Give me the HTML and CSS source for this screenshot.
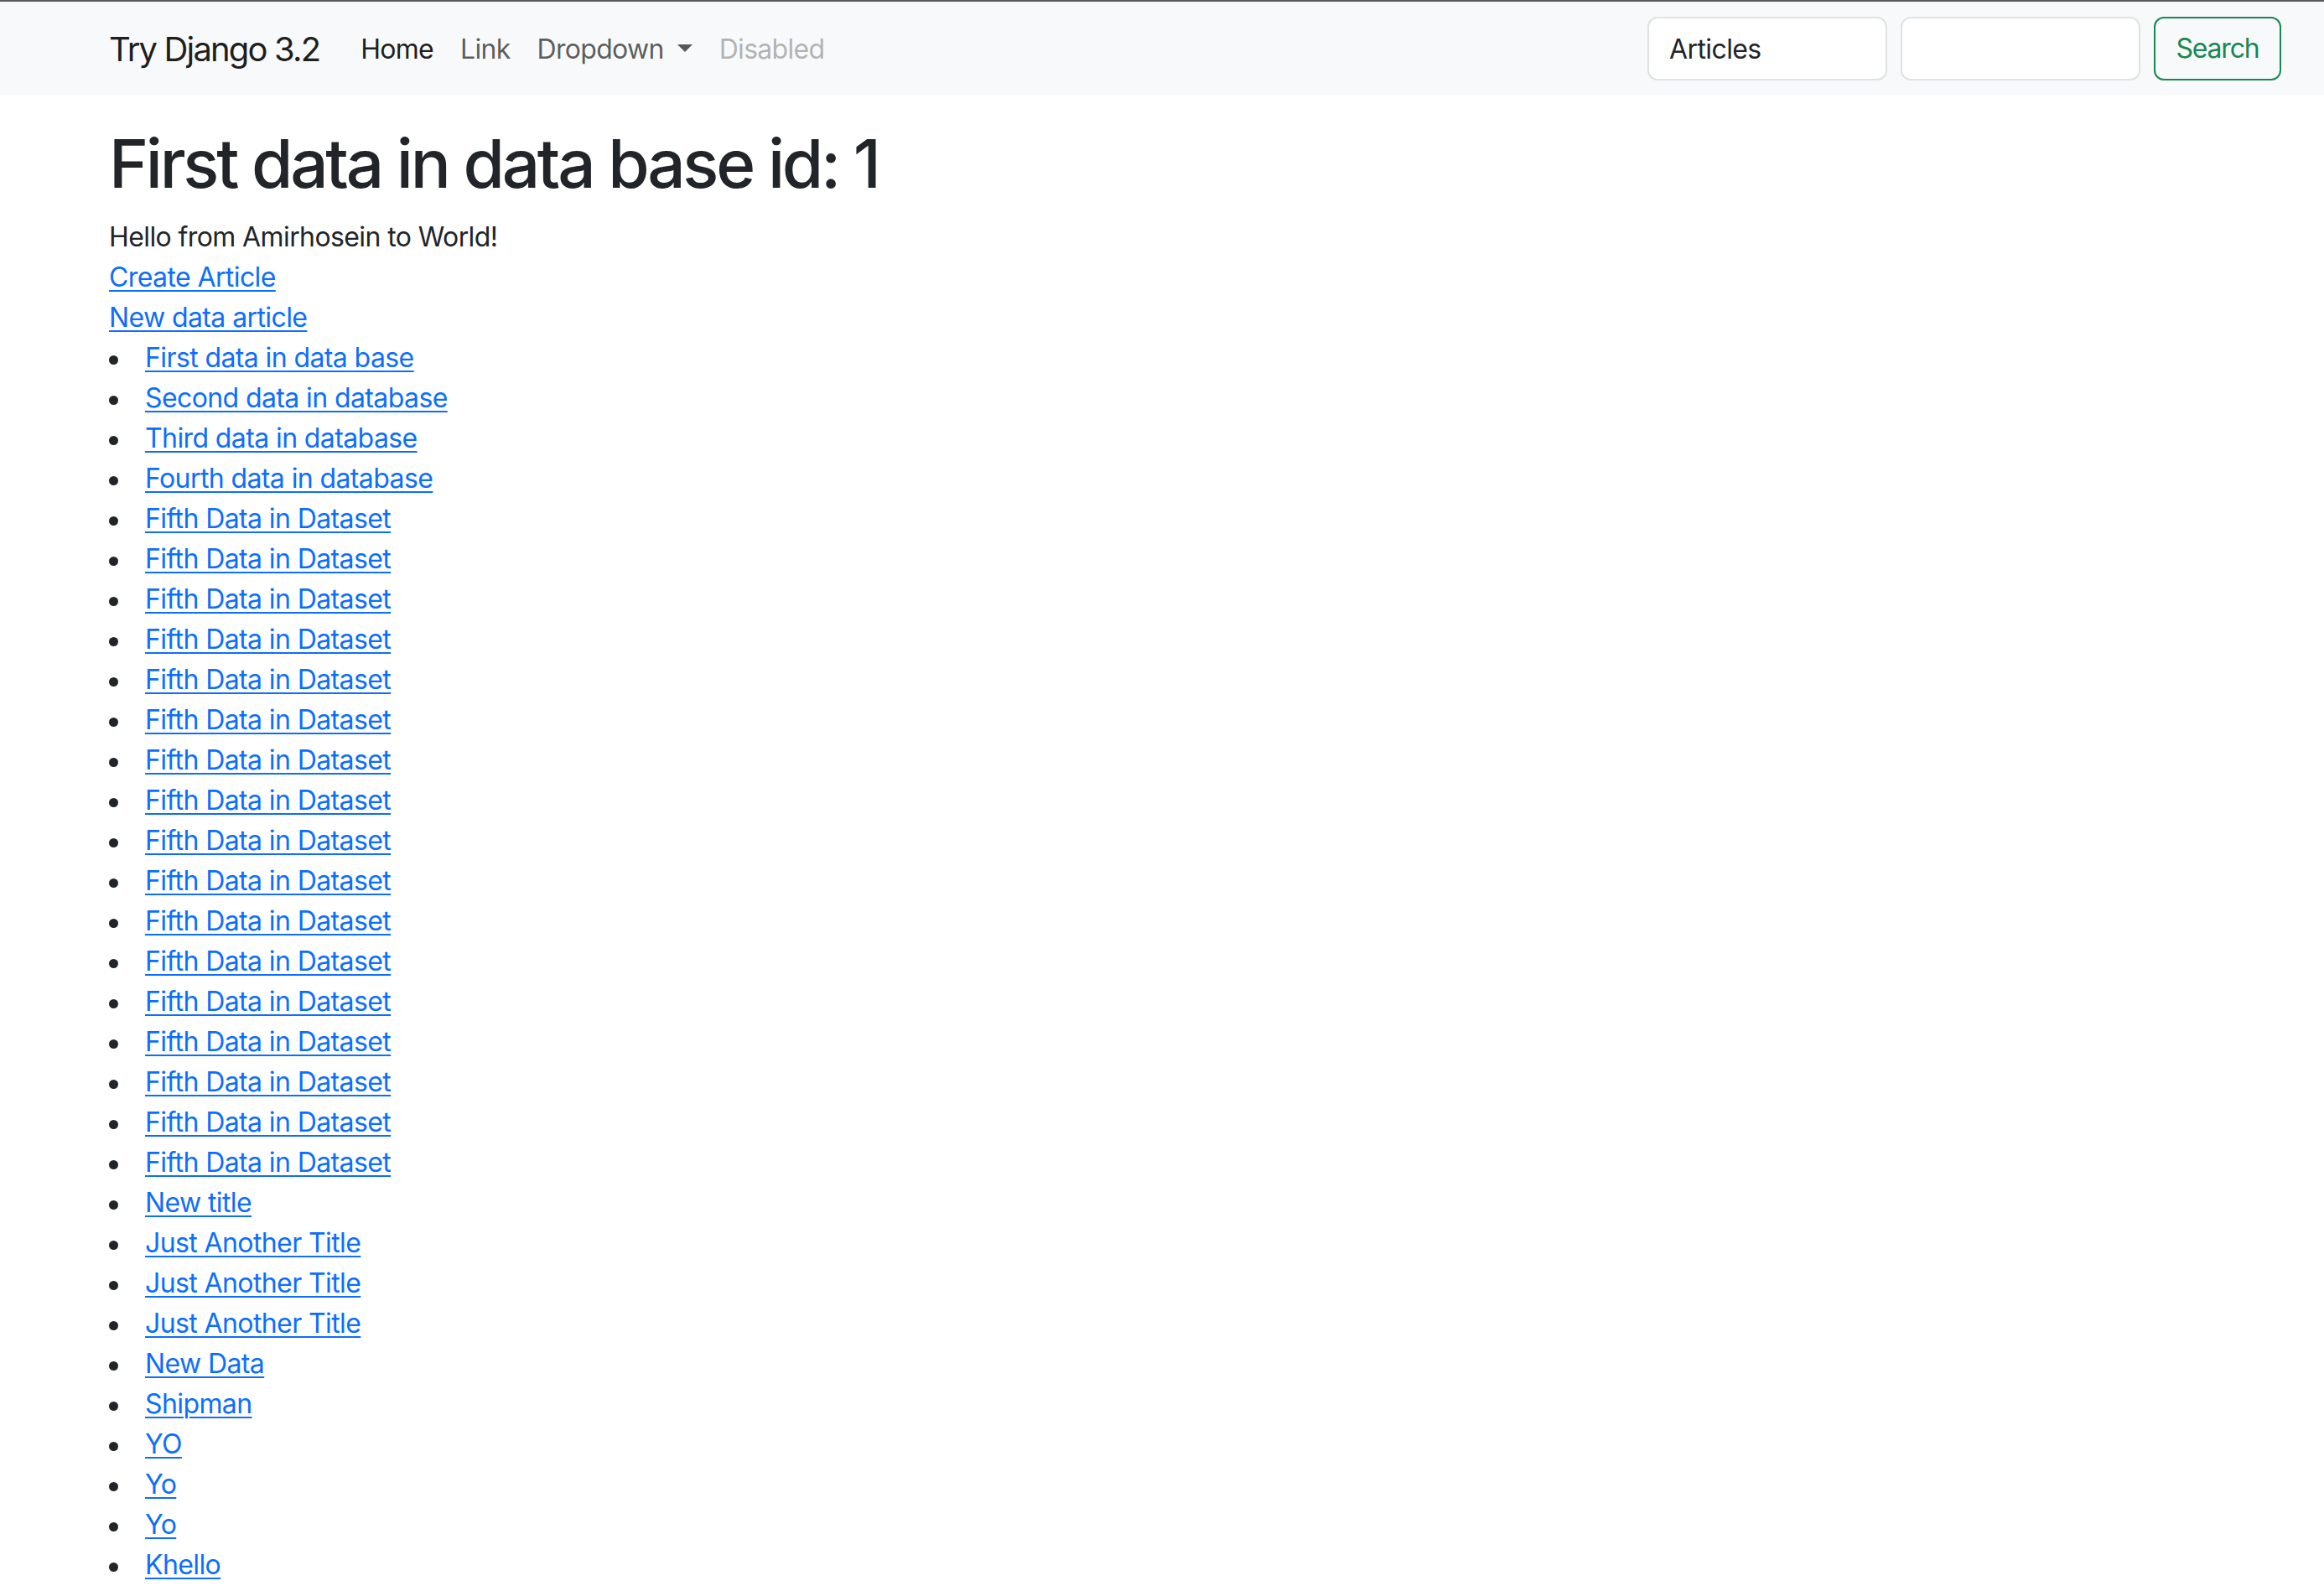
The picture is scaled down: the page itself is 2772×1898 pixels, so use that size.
FILE: index.html
```html
<!DOCTYPE html>
<html lang="en">
<head>
<meta charset="utf-8">
<title>Try Django 3.2</title>
<link rel="stylesheet" href="styles.css">
</head>
<body>
<nav class="navbar">
  <a class="brand" href="#">Try Django 3.2</a>
  <ul class="nav">
    <li><a class="nav-link active" href="#">Home</a></li>
    <li><a class="nav-link" href="#">Link</a></li>
    <li><a class="nav-link dropdown" href="#">Dropdown</a></li>
    <li><a class="nav-link disabled" href="#">Disabled</a></li>
  </ul>
  <form class="search">
    <input class="field" type="text" value="Articles">
    <input class="field" type="search">
    <button class="btn-search" type="button">Search</button>
  </form>
</nav>
<main class="content">
  <h1 class="title">First data in data base id: 1</h1>
  <div class="line">Hello from Amirhosein to World!</div>
  <div class="line"><a href="#">Create Article</a></div>
  <div class="line"><a href="#">New data article</a></div>
  <ul class="list">
    <li><a href="#">First data in data base</a></li>
    <li><a href="#">Second data in database</a></li>
    <li><a href="#">Third data in database</a></li>
    <li><a href="#">Fourth data in database</a></li>
    <li><a href="#">Fifth Data in Dataset</a></li>
    <li><a href="#">Fifth Data in Dataset</a></li>
    <li><a href="#">Fifth Data in Dataset</a></li>
    <li><a href="#">Fifth Data in Dataset</a></li>
    <li><a href="#">Fifth Data in Dataset</a></li>
    <li><a href="#">Fifth Data in Dataset</a></li>
    <li><a href="#">Fifth Data in Dataset</a></li>
    <li><a href="#">Fifth Data in Dataset</a></li>
    <li><a href="#">Fifth Data in Dataset</a></li>
    <li><a href="#">Fifth Data in Dataset</a></li>
    <li><a href="#">Fifth Data in Dataset</a></li>
    <li><a href="#">Fifth Data in Dataset</a></li>
    <li><a href="#">Fifth Data in Dataset</a></li>
    <li><a href="#">Fifth Data in Dataset</a></li>
    <li><a href="#">Fifth Data in Dataset</a></li>
    <li><a href="#">Fifth Data in Dataset</a></li>
    <li><a href="#">Fifth Data in Dataset</a></li>
    <li><a href="#">New title</a></li>
    <li><a href="#">Just Another Title</a></li>
    <li><a href="#">Just Another Title</a></li>
    <li><a href="#">Just Another Title</a></li>
    <li><a href="#">New Data</a></li>
    <li><a href="#">Shipman</a></li>
    <li><a href="#">YO</a></li>
    <li><a href="#">Yo</a></li>
    <li><a href="#">Yo</a></li>
    <li><a href="#">Khello</a></li>
  </ul>
</main>
</body>
</html>
```
FILE: styles.css
```css
html, body {
  margin: 0;
  padding: 0;
}
body {
  font-family: Inter, Roboto, "Liberation Sans", sans-serif;
  font-size: 32px;
  line-height: 48px;
  color: #212529;
  background: #fff;
  letter-spacing: -0.6px;
  overflow: hidden;
}
a {
  color: #0d6efd;
  text-decoration: underline;
  text-decoration-thickness: 2px;
  text-underline-offset: 4px;
}

/* navbar */
.navbar {
  display: flex;
  align-items: center;
  height: 110px;
  border-top: 2px solid #5b5b5b;
  background: #f8f9fa;
  padding: 2px 51px 0 130px;
  box-sizing: content-box;
}
.brand {
  font-size: 40px;
  line-height: 60px;
  letter-spacing: -1.85px;
  color: rgba(0, 0, 0, 0.9);
  text-decoration: none;
  margin-right: 33px;
}
.nav {
  display: flex;
  list-style: none;
  margin: 0;
  padding: 0;
}
.nav-link {
  display: block;
  padding: 16px 16px;
  line-height: 48px;
  color: rgba(0, 0, 0, 0.65);
  text-decoration: none;
  letter-spacing: -0.7px;
}
.nav-link.active {
  color: rgba(0, 0, 0, 0.9);
}
.nav-link.disabled {
  color: rgba(0, 0, 0, 0.3);
}
.dropdown::after {
  content: "";
  display: inline-block;
  margin-left: 16px;
  vertical-align: 8px;
  border-top: 9.6px solid rgba(0, 0, 0, 0.65);
  border-left: 9.6px solid transparent;
  border-right: 9.6px solid transparent;
}
.search {
  display: flex;
  gap: 16px;
  margin: -2px 0 0 auto;
}
.field {
  box-sizing: border-box;
  width: 286px;
  height: 76px;
  margin: 0;
  padding: 12px 24px;
  border: 2px solid #dee2e6;
  border-radius: 12px;
  background: #fff;
  font-family: inherit;
  font-size: 32px;
  letter-spacing: -0.6px;
  color: #212529;
  outline: none;
}
.btn-search {
  box-sizing: border-box;
  height: 76px;
  width: 152px;
  margin: 0;
  padding: 12px 24px;
  border: 2px solid #198754;
  border-radius: 12px;
  background: transparent;
  color: #198754;
  font-family: inherit;
  font-size: 32px;
  letter-spacing: -1.2px;
  line-height: 48px;
}

/* content */
.content {
  padding: 33px 130px 0 130px;
}
.title {
  margin: 0 0 16px 0;
  font-size: 80px;
  line-height: 96px;
  font-weight: 500;
  letter-spacing: -3.3px;
}
.line {
  line-height: 48px;
}
.list {
  list-style: none;
  margin: 0 0 32px 0;
  padding: 0;
}
.list li::before {
  content: "";
  display: inline-block;
  width: 11px;
  height: 11px;
  border-radius: 50%;
  background: #212529;
  vertical-align: middle;
  margin-right: 32px;
}
```
